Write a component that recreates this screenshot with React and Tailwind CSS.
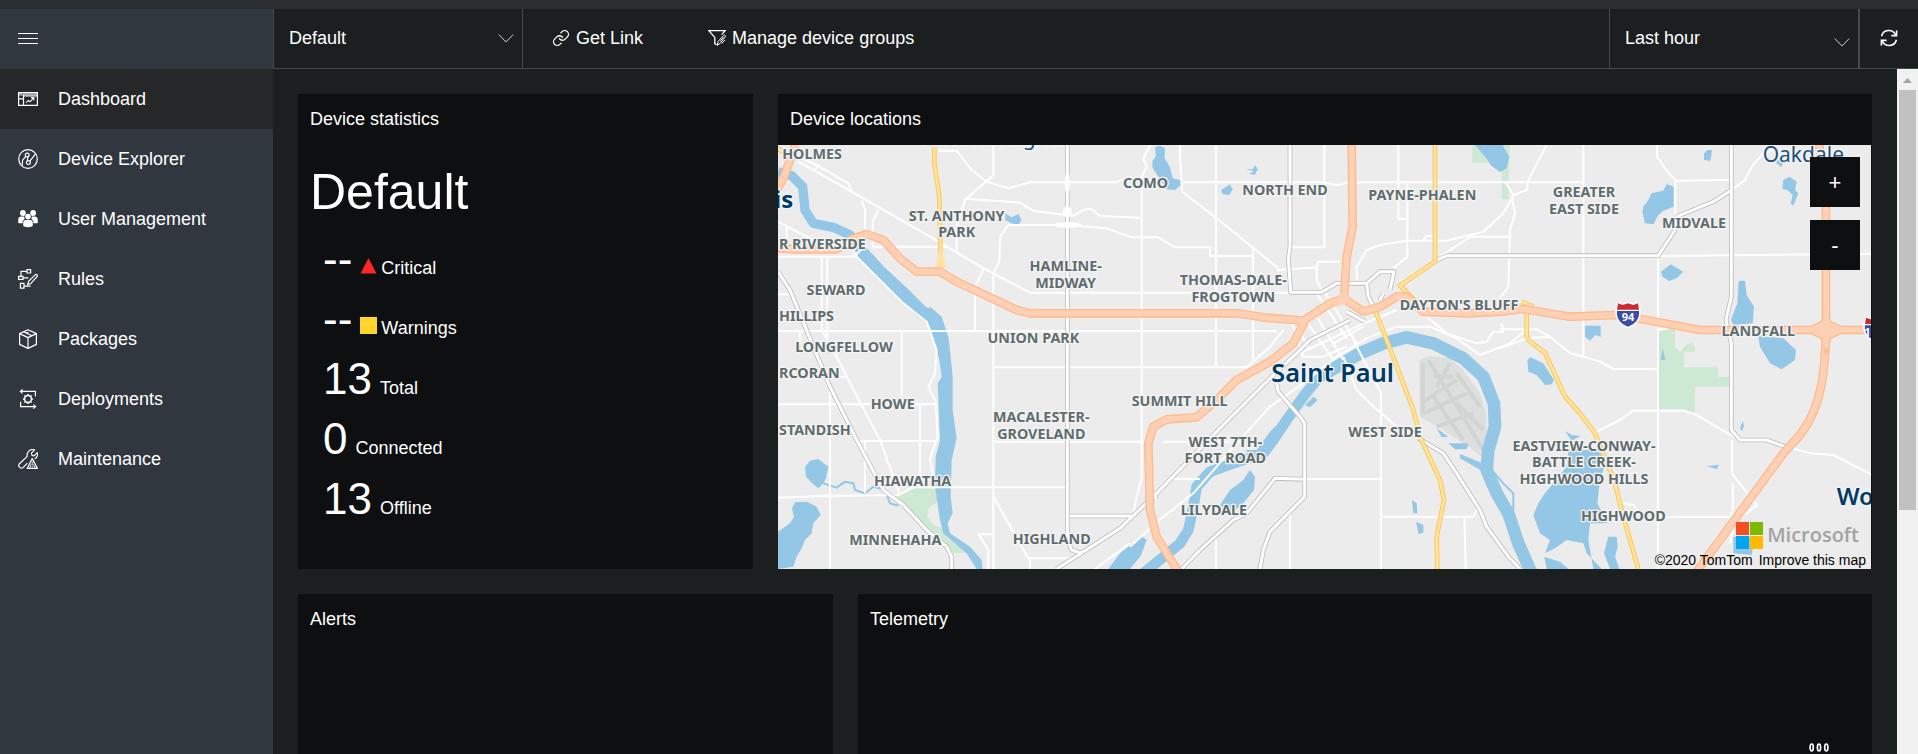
import React from 'react';
import { Link } from 'lucide-react';

/* ---------- icons ---------- */

const line = { fill: 'none', stroke: 'currentColor', strokeWidth: 1.2 };

function DashboardIcon() {
  return (
    <svg className="size-5 shrink-0" viewBox="0 0 20 20" {...line} aria-hidden="true">
      <path d="M0.6 3.6H19.4V16.4H0.6Z" />
      <path d="M0.6 5.4H19.4" strokeWidth="2.4" opacity="0.6" />
      <path d="M5.5 6V16.4M0.6 9.8H5.5M5.5 7H19.4" />
      <path d="M8 13.6L10.4 11.4L12 12.8L15.6 8.8M13 8.6H15.8V11.4" strokeWidth="1.1" />
    </svg>
  );
}

function ExplorerIcon() {
  return (
    <svg className="size-5 shrink-0" viewBox="0 0 20 20" {...line} aria-hidden="true">
      <circle cx="10" cy="10" r="9.3" />
      <circle cx="9.2" cy="6" r="1.9" />
      <circle cx="10.4" cy="13.6" r="1.9" />
      <path d="M7.8 7.4L4.6 11.2L4.2 16.4M9.8 8L9.4 11.8M11.8 12.2L17.4 5.2" />
    </svg>
  );
}

function UsersIcon() {
  return (
    <svg className="size-5 shrink-0" viewBox="0 0 20 20" fill="currentColor" aria-hidden="true">
      <circle cx="4.9" cy="4" r="2.9" />
      <circle cx="15.1" cy="4" r="2.9" />
      <path d="M0.2 14V10.5C0.2 8.6 1.6 7.4 3.4 7.4H6.2L6.6 10L4.6 12.2V14.3H1.2ZM19.8 14V10.5C19.8 8.6 18.4 7.4 16.6 7.4H13.8L13.4 10L15.4 12.2V14.3H18.8Z" />
      <circle cx="10" cy="7.6" r="2.8" />
      <path d="M5.2 17V13.8C5.2 12 6.4 10.9 8 10.9H12C13.6 10.9 14.8 12 14.8 13.8V17C12 18.6 8 18.6 5.2 17Z" />
    </svg>
  );
}

function RulesIcon() {
  return (
    <svg className="size-5 shrink-0" viewBox="0 0 20 20" {...line} aria-hidden="true">
      <path d="M9 0.6H12.6V4H9ZM0.6 7.4H5V10.4H0.6ZM2.4 14.4H6V19.2H2.4Z" />
      <path d="M9 2.4H3V7.4M5 8.8H10.4M6 17.2H12.6" />
      <path d="M9.6 15.8L10.6 12.2L17.4 5.6C18.2 4.8 20 6.2 19.2 7.4L12.8 14.6Z" />
    </svg>
  );
}

function PackageIcon() {
  return (
    <svg className="size-5 shrink-0" viewBox="0 0 20 20" {...line} strokeLinejoin="round" aria-hidden="true">
      <path d="M10 0.8L18.4 4.6V15.4L10 19.4L1.6 15.4V4.6Z" />
      <path d="M1.6 4.6L10 8.6L18.4 4.6M10 8.6V19.4M5.6 2.8L14 6.8M8 4.4L10.4 3.2" />
    </svg>
  );
}

function DeployIcon() {
  return (
    <svg className="size-5 shrink-0" viewBox="0 0 20 20" {...line} aria-hidden="true">
      <path d="M4.6 0.4L2.4 2.4L4.6 4.4M2.6 2.4H17.4V7.2M15.4 15.6L17.6 17.6L15.4 19.6M17.4 17.6H2.6V12.8" />
      <circle cx="10" cy="10" r="3.4" strokeWidth="1.5" />
      <path d="M10 4.9V6.4M10 13.6V15.1M4.9 10H6.4M13.6 10H15.1M6.4 6.4L7.5 7.5M12.5 12.5L13.6 13.6M6.4 13.6L7.5 12.5M12.5 7.5L13.6 6.4" strokeWidth="1.4" />
    </svg>
  );
}

function MaintenanceIcon() {
  return (
    <svg className="size-5 shrink-0" viewBox="0 0 20 20" {...line} strokeLinejoin="round" aria-hidden="true">
      <path d="M9.4 14.2L5 18.6C3 20.4 -0.4 17.4 1.2 15L9.2 7.4C8.4 3 12.4 -0.6 16.6 0.8L13.4 4.2L14 6.4L16 6.8L19.2 3.6C20.2 6.4 18.6 9.2 16.6 9.8" />
      <path d="M14.2 9.6L19.4 19.4H9.2Z" />
      <path d="M14.2 12.4V16.4M14.2 17.2V18.4M11.8 19L13 15.4M16.8 19L15.4 15.4" strokeWidth="0.9" />
    </svg>
  );
}

function FilterIcon() {
  return (
    <svg className="size-[18px] shrink-0" viewBox="0 0 18 18" {...line} aria-hidden="true">
      <path d="M8.6 15.8L6.8 14.6V8.4L0.8 1.6H17.2L13.6 5.6M0.8 1.6H17.2" strokeWidth="1.3" />
      <path d="M9.2 16.4L10.2 12.4L15.6 6.4C16.6 5.6 18 6.8 17.2 8L12 14.4ZM12.4 11.8L15.4 8.4M13.6 14.6L17 11" strokeWidth="1" />
    </svg>
  );
}

function RefreshIcon() {
  return (
    <svg className="size-[18px]" viewBox="0 0 18 18" {...line} strokeWidth="1.6" aria-hidden="true">
      <path d="M1.6 7.2C3.2 0.4 12.4 -0.6 15.8 5.8M16.4 10.8C14.8 17.6 5.6 18.6 2.2 12.2" />
      <path d="M16.6 1.4V6.6H11.4M1.4 16.6V11.4H6.6" />
    </svg>
  );
}

function Chevron() {
  return (
    <svg className="pointer-events-none absolute right-2 top-6 h-3 w-4 text-[#d0d0d0]" viewBox="0 0 16 12" fill="none" stroke="currentColor" aria-hidden="true">
      <path d="M0.8 1.5L8 9L15.2 1.5" />
    </svg>
  );
}

/* ---------- map ---------- */

const WATER = [
  'M480 530L450 560L480 590L508 690L515 740L503 760L507 860L510 930L497 980L495 1070L510 1170L520 1210L590 1270L620 1317H638L635 1290L600 1250L540 1210L533 1180L548 1150L542 1100L545 990L560 925L548 840V740L540 660L535 620L515 560Z',
  'M105 1010L120 992L145 987L175 1010L168 1045L160 1060L145 1075L125 1058L108 1040Z',
  'M75 1117L110 1115L140 1130L152 1155L130 1180L125 1210L105 1230L95 1255L80 1280L70 1310L24 1317V1205L60 1180L72 1160L66 1135Z',
  'M706 250L725 262L745 252L755 270L745 285L725 280L706 270Z',
  'M1155 52L1170 47L1185 55L1184 85L1200 112L1208 145L1230 150L1232 165L1215 180L1190 178L1165 140L1147 112L1148 92L1158 78Z',
  'M1353 180L1380 163L1388 178L1378 195L1358 192Z',
  'M1428 118H1448L1455 106L1463 118L1455 134L1438 132L1452 124Z',
  'M2115 45L2145 80L2165 108L2190 126L2210 115L2218 80L2200 50V45Z',
  'M2802 70L2812 60H2826L2822 92L2802 90Z',
  'M2620 230L2635 210L2645 190L2680 182L2690 162L2711 170V230L2680 242L2665 255L2650 283L2625 280L2617 245Z',
  'M2673 425L2702 403L2740 425L2720 445L2698 453L2677 440Z',
  'M3040 150L3058 140L3080 155L3075 180L3085 190L3070 227L3062 220L3068 195L3052 180L3037 178Z',
  'M3020 85L3040 95L3035 112L3018 98Z',
  'M2906 452H2925L2930 495L2952 530L2948 580L2890 585L2883 570L2902 520Z',
  'M2965 618L3040 625L3078 660L3075 690L3035 718L3000 700L2970 650Z',
  'M2445 587H2492V620L2475 615L2460 632L2445 620Z',
  'M2272 690L2282 682L2320 700L2352 750L2345 763L2325 765L2300 735L2275 725Z',
  'M2672 690L2678 655L2686 690Z',
  'M2910 895L2918 873L2922 888L2916 904Z',
  'M2812 1008L2847 1004L2840 1018Z',
  'M2350 1060L2390 1010L2395 960H2480L2510 990L2490 1050L2482 1120L2508 1170L2512 1180H2460L2455 1230L2470 1317H2495L2450 1270L2440 1240L2390 1230L2355 1255L2325 1270L2340 1230L2310 1210L2290 1155L2305 1120L2325 1090Z',
  'M2323 1280L2370 1295L2395 1317H2330Z',
  'M2515 1220H2540L2543 1250L2535 1280L2548 1317H2520L2502 1270Z',
  'M2890 1220H2955L2945 1275L2890 1270Z',
  'M2385 903L2405 915L2432 918L2405 932Z',
  'M1350 1125L1380 1080L1420 1050L1440 1020L1455 1040L1452 1080L1420 1120L1390 1145L1370 1155Z',
  'M1425 960L1460 960L1500 905L1520 885L1515 905L1480 950L1450 980Z',
  'M1605 825L1630 800L1643 810L1620 832Z',
  'M2000 895L2035 920L2015 922Z',
  'M2035 940H2095L2090 958H2055Z',
  'M2070 972L2150 1005L2140 1025L2070 985Z',
  'M1926 1110L1940 1120L1942 1150H1930Z',
  'M1938 1175L1960 1185V1208L1946 1212Z',
  'M1015 1317L1050 1270L1115 1218L1130 1230L1112 1278L1080 1317Z',
];

const PARKS = [
  'M2665 600L2715 597V650L2730 667L2748 645L2765 638L2775 650V665H2742V712H2844V740H2878V770H2775V848L2740 838H2665Z',
  'M2107 45V98H2170L2195 120V208H2216V110L2220 45Z',
  'M395 1085L440 1070L497 1078L502 1115L475 1135L472 1160L490 1185L520 1195L530 1220L592 1268H550L520 1230L470 1200L420 1140L380 1098Z',
];

const STREETS = [
  'M85 95L245 185L515 340L640 415L780 488H1560',
  'M75 75L140 105L235 160L245 185M135 120L142 105',
  'M505 62H560L605 120L650 155L715 175L780 157H1035L1085 140',
  'M670 45V135L585 210L560 290V360',
  'M590 207L700 214L750 218L790 243L910 257L945 238H965L990 258L1110 263',
  'M890 285H715L690 320L688 395L670 430V1317',
  'M890 285L1010 295L1085 322H1165L1215 352H1320V378H1450',
  'M1140 45L1120 85L1130 110L1115 140V1045L1100 1100L1090 1150',
  'M275 210L285 240V300M325 240L308 275V350H530',
  'M24 275L130 330M50 290V370M24 380H250L290 345',
  'M250 370L400 520L470 575L500 660L495 730L475 770L497 815L503 920L480 985L490 1040',
  'M24 603H1520M24 493H60M155 380V600L205 690M172 380V630',
  'M180 760V1317M395 605V800M24 823H500M450 825V1070M285 930V1090M270 933H503M90 605V640M170 740V765H185M200 740H230',
  'M24 1103L150 1098L385 1095L430 1072H890',
  'M190 660L230 740L330 930L390 1095',
  'M670 712H1430L1500 650L1540 600',
  'M670 935H1130M1180 935H1380',
  'M640 420L615 470V600',
  'M670 1100L775 1285H920M780 1285V1317M625 1213L655 1260V1317M625 1213H668',
  'M1338 45V710M1338 1220V1317M1449 355V700',
  'M1230 45V80L1237 185L1340 265L1525 415',
  'M1237 157H1660L1700 165L1740 157H2440',
  'M1520 420L1640 412L1645 395H1710M1640 412V450L1660 490M1663 45V352H1560',
  'M1885 45V267H1910M1912 157V380L1870 415',
  'M1760 410L1790 360L1830 345L1910 332H2030L2140 305L2200 250L2230 200',
  'M2000 385L2110 315M2100 320H2225M1960 330L1970 318H1990M1760 405V450',
  'M2330 45L2275 150L2270 180L2230 195L2205 155M2225 200L2235 250L2220 300L2215 470L2190 505',
  'M2440 45V680M2190 655L2270 625L2340 620L2400 670L2440 680L2490 695L2530 717H2660M2190 598H2300L2340 620',
  'M2661 45V80L2685 115L2716 150V290M2716 152L2880 150',
  'M2885 180L2925 150L2945 110L2980 70L3010 60',
  'M2664 385V1317M2664 378L3303 371M2664 600L2690 595',
  'M2480 905L2550 870L2590 842H2740L2780 855L2890 920',
  'M2690 1161H2890M2886 930V1030L2940 1100L2960 1125L2930 1150H2880M2888 1060V1200L2880 1240',
  'M3070 955L3120 970L3190 975L3303 1033',
  'M1210 1047H1290M1605 1047H1835M1833 790V1317M1720 680L1760 780L1800 820L1880 890M1750 630L1833 790',
  'M1838 1160H2110L2120 1140M2083 1160L2087 1317M1560 1150V1317',
  'M1080 1250L1180 1160L1270 1090L1340 1010L1400 940L1500 830L1600 760L1700 680L1790 625L1880 590L1980 590L2060 625L2130 675L2220 640L2270 600',
  'M1970 560L2030 610L2120 640L2150 635L2170 605H2200L2195 580',
  'M1640 490L1730 625M1660 480L1760 640M1610 575L1690 690M1640 560L1720 690M1580 590L1620 660M1590 670L1760 590L1880 540M1690 640L1780 590M1560 560L1600 680H1660L1730 650',
  'M975 1317L1080 1240M2560 1120L2590 1125L2610 1150',
];

const HIGHWAYS = [
  'M892 45V1230L905 1260L935 1270',
  'M24 425L60 480L130 650L180 770L260 930L340 1080L400 1125L470 1200L530 1250L545 1280V1317',
  'M860 1317L1050 1195L1165 1085L1340 905L1500 745L1580 670L1620 630L1740 570',
  'M1560 45V350L1555 385L1562 487H1655L1700 460H1790L1830 425H1872L1860 480',
  'M1790 460L1795 500L1815 540M1830 510L1840 490',
  'M1520 760L1525 785L1590 860L1604 880V1100L1500 1205L1480 1260L1470 1317',
  'M1604 1048L1515 1045L1430 1150L1390 1170L1290 1260L1235 1317',
  'M900 1158H1085',
  'M1945 925L2020 970L2060 1030L2130 1140L2150 1190L2215 1280L2250 1317',
  'M1990 395L2030 377H2665L2715 300L2720 260L2830 215L2885 180',
  'M2884 45V500L2868 570L2884 640V900L2910 930H2990L3060 955',
  'M1730 545L1785 575M1150 1090L1160 1110',
];

const ARTERIALS = [
  'M493 50V100L508 200L512 415',
  'M1995 45V395L1890 467L1975 550',
  'M1815 540L1850 630L1930 840L1950 920L2010 1050L2022 1110L2000 1220L2002 1317',
  'M2255 515L2290 530M2270 545V620L2280 635L2325 668L2385 800L2430 850L2475 910L2500 970L2535 1060L2560 1160L2605 1317',
];

const INTERSTATES = [
  'M24 355L80 358H200L250 325L290 312L340 330L390 385L440 425H510L560 455L740 540L780 550H1400L1480 562L1600 572L1680 520L1720 505L1780 545L1830 530L1880 500L1910 500L1960 545L2090 550L2190 545L2260 537L2400 560L2540 555L2630 570L2790 600H3303',
  'M24 175L42 140L76 45',
  'M1745 45L1748 290L1730 380L1722 505',
  'M1605 572L1570 640L1500 695L1400 750L1340 810L1280 862L1190 868L1150 890L1135 940L1140 1140L1160 1220L1225 1325',
  'M3148 45L3168 240V600Q3166 700 3155 760Q3140 850 3090 915L3040 970L2780 1325',
];

const RUNWAYS = [
  'M1958 700V850M1975 690L2140 960M1990 740H2050M2040 700L2000 770M1960 815L2060 750M1960 850L2090 790M2060 730L2130 830M2000 890L2110 850M1990 800L2080 930M2060 820L2140 900',
];

const LABELS = [
  ['HOLMES', 126, 87], ['ST. ANTHONY', 560, 273], ['PARK', 560, 322], ['SEWARD', 198, 496],
  ['LONGFELLOW', 222, 667], ['HOWE', 368, 838], ['HIAWATHA', 428, 1067], ['MINNEHAHA', 376, 1246],
  ['HIGHLAND', 845, 1241], ['MACALESTER-', 814, 877], ['GROVELAND', 814, 926], ['UNION PARK', 790, 638],
  ['HAMLINE-', 887, 424], ['MIDWAY', 887, 473], ['COMO', 1127, 174], ['NORTH END', 1545, 195],
  ['PAYNE-PHALEN', 1957, 209], ['THOMAS-DALE-', 1390, 466], ['FROGTOWN', 1390, 515],
  ["DAYTON'S BLUFF", 2067, 539], ['GREATER', 2442, 202], ['EAST SIDE', 2442, 252], ['MIDVALE', 2772, 293],
  ['LANDFALL', 2965, 618], ['SUMMIT HILL', 1229, 828], ['WEST 7TH-', 1366, 951], ['FORT ROAD', 1366, 1000],
  ['WEST SIDE', 1845, 920], ['LILYDALE', 1332, 1155], ['EASTVIEW-CONWAY-', 2442, 963],
  ['BATTLE CREEK-', 2442, 1012], ['HIGHWOOD HILLS', 2442, 1061], ['HIGHWOOD', 2560, 1173],
];

const EDGE_LABELS = [['R RIVERSIDE', 357], ['HILLIPS', 574], ['RCORAN', 743], ['STANDISH', 915]];

function Roads({ paths, casing, fill, outer, inner }) {
  const d = paths.join('');
  return (
    <g fill="none" strokeLinejoin="round">
      {casing && <path d={d} stroke={casing} strokeWidth={outer} />}
      <path d={d} stroke={fill} strokeWidth={inner} />
    </g>
  );
}

function Shield({ x, y, label, labelX = 0 }) {
  return (
    <g transform={`translate(${x} ${y})`}>
      <path d="M-30 -40L-16 -35L0 -40L16 -35L30 -40L38 -18C42 10 26 32 0 40C-26 32 -42 10 -38 -18Z" fill="#fff" />
      <path d="M-33 -12H33C36 10 22 28 0 35C-22 28 -36 10 -33 -12Z" fill="#3c4ba6" />
      <path d="M-33 -16L-30 -35L-16 -30L0 -35L16 -30L30 -35L33 -16Z" fill="#cc2a2e" />
      <text x={labelX} y="19" textAnchor="middle" fontSize="33" fontWeight="700" fill="#fff">{label}</text>
    </g>
  );
}

function MapDrawing() {
  return (
    <svg
      className="absolute inset-0 size-full font-['Noto_Sans',sans-serif]"
      viewBox="24 45 3279 1272"
      preserveAspectRatio="xMidYMid slice"
      role="img"
      aria-label="Map of Saint Paul"
    >
      <rect x="-500" y="-500" width="4400" height="2400" fill="#ececec" />
      <path d={PARKS.join('')} fill="#cde8d3" />
      <path d="M1948 690L1980 678L2040 685L2080 720L2130 790L2148 850L2150 920L2135 980L2080 940L2010 895L1950 860Z" fill="#dcdfde" />
      <path d={RUNWAYS.join('')} stroke="#d0d4d3" strokeWidth="12" fill="none" />
      <g fill="none" stroke="#94c7e6" strokeLinejoin="round">
        <path d="M24 125L65 137L98 170L105 240L130 280L190 292L240 315L275 365L330 425" strokeWidth="28" />
        <path d="M275 365L330 425L400 490L450 540L490 570" strokeWidth="38" />
        <path d="M1120 1330L1230 1240L1255 1200L1270 1130L1280 1070L1320 1025L1390 1000L1480 970L1510 930L1550 870L1600 800L1640 750L1680 720" strokeWidth="32" />
        <path d="M1670 728L1770 670L1840 640L1910 622L1990 640L2080 685L2140 740L2172 820L2175 890L2155 960L2150 1020L2180 1090L2215 1150L2245 1240L2285 1330" strokeWidth="38" />
        <path d="M160 1060L200 1073L225 1055L250 1060L255 1080L285 1090L310 1070L345 1080L360 1120L385 1127M2165 1020L2200 1060L2230 1090V1140" strokeWidth="6" />
      </g>
      <path d={WATER.join('')} fill="#94c7e6" />
      <Roads paths={STREETS} fill="#fff" inner={6} />
      <Roads paths={HIGHWAYS} casing="#bdbdbd" fill="#fff" outer={14} inner={9} />
      <ellipse cx="892" cy="160" rx="8" ry="34" fill="#fff" />
      <ellipse cx="892" cy="245" rx="13" ry="17" fill="#fff" />
      <ellipse cx="892" cy="285" rx="42" ry="8" fill="#fff" />
      <Roads paths={ARTERIALS} casing="#fbc94b" fill="#ffe2a4" outer={14} inner={8} />
      <path d="M495 412L512 345L528 412Z" fill="#ffe2a4" />
      <path d="M24 50L60 72M24 62L50 78" stroke="#fbc94b" strokeWidth="4" />
      <Roads paths={INTERSTATES} casing="#ffb98c" fill="#ffd0b4" outer={26} inner={18} />
      <path d="M3168 540L3182 575L3235 600L3182 625L3168 675L3154 625L3100 600L3154 575Z" fill="#ffd0b4" stroke="#ffb98c" strokeWidth="4" />
      <path d="M3168 520V650M3080 600H3250" stroke="#ffd0b4" strokeWidth="18" />
      <path d="M1722 480L1745 515L1700 530L1685 520Z" fill="#ffd0b4" />
      <Shield x={2574} y={555} label="94" />
      <Shield x={3318} y={598} label="1" labelX={-26} />
      <g fill="#5f6d6f" stroke="#f4f4f4" strokeWidth="8" strokeLinejoin="round" paintOrder="stroke" fontSize="43" fontWeight="700">
        {LABELS.map(([t, x, y]) => (
          <text key={t} x={x} y={y} textAnchor="middle">{t}</text>
        ))}
        {EDGE_LABELS.map(([t, y]) => (
          <text key={t} x="27" y={y}>{t}</text>
        ))}
      </g>
      <g fill="#003a66" stroke="#f4f4f4" strokeWidth="8" strokeLinejoin="round" paintOrder="stroke" fontSize="76">
        <text x="1688" y="757" textAnchor="middle" fontWeight="600">Saint Paul</text>
        <text x="70" y="235" textAnchor="end" fontSize="72" fontWeight="700">is</text>
        <text x="3200" y="1125" fontSize="72" fontWeight="600">Wo</text>
        <g fill="#1f5078" fontSize="63">
          <text x="2978" y="96">Oakdale</text>
          <text x="670" y="46" textAnchor="middle">Falcon Heights</text>
        </g>
      </g>
    </svg>
  );
}

/* ---------- page ---------- */

const NAV = [
  ['Dashboard', DashboardIcon],
  ['Device Explorer', ExplorerIcon],
  ['User Management', UsersIcon],
  ['Rules', RulesIcon],
  ['Packages', PackageIcon],
  ['Deployments', DeployIcon],
  ['Maintenance', MaintenanceIcon],
];

function Sidebar() {
  return (
    <nav className="flex w-[273px] shrink-0 flex-col bg-[#30373f]" aria-label="Main">
      <button type="button" aria-label="Toggle navigation" className="flex h-[60px] items-center px-[18px]">
        <svg className="h-3 w-5" viewBox="0 0 20 12" stroke="currentColor" aria-hidden="true">
          <path d="M0 0.5H20M0 5.5H20M0 10.5H20" />
        </svg>
      </button>
      {NAV.map(([label, Icon], i) => (
        <a
          key={label}
          href="#"
          aria-current={i === 0 ? 'page' : undefined}
          className={`flex h-[60px] items-center gap-5 px-[18px] ${i === 0 ? 'bg-[#262728]' : ''}`}
        >
          <Icon />
          {label}
        </a>
      ))}
    </nav>
  );
}

function Header() {
  return (
    <header className="flex h-[60px] shrink-0 border-b border-[#474a4a]">
      <div className="relative w-[250px] border-x border-[#474a4a]">
        <select aria-label="Device group" className="size-full appearance-none bg-transparent pb-px pl-[15px] pr-8 outline-none">
          <option>Default</option>
        </select>
        <Chevron />
      </div>
      <button type="button" className="ml-[29px] flex items-center gap-1.5 pb-px">
        <Link className="size-[18px] shrink-0" strokeWidth={1.7} aria-hidden="true" />
        Get Link
      </button>
      <button type="button" className="ml-[65px] flex items-center gap-1.5 pb-px">
        <FilterIcon />
        Manage device groups
      </button>
      <div className="relative ml-auto w-[251px] border-l border-r-2 border-[#474a4a]">
        <select aria-label="Time interval" className="size-full appearance-none bg-transparent pb-px pl-[15px] pr-8 outline-none">
          <option>Last hour</option>
        </select>
        <div className="pointer-events-none absolute right-0 top-1">
          <Chevron />
        </div>
      </div>
      <button type="button" aria-label="Refresh" className="flex w-[58px] items-center justify-center pb-px">
        <RefreshIcon />
      </button>
    </header>
  );
}

function Panel({ title, className = '', children }) {
  return (
    <section className={`flex flex-col bg-[#0d0f10] ${className}`}>
      <h2 className="h-[51px] shrink-0 px-3 pt-[13px] leading-6">{title}</h2>
      {children}
    </section>
  );
}

function Stat({ value, label, children }) {
  return (
    <div className="flex h-[60px] items-baseline">
      <dd className="order-1 mr-2 text-[44px] leading-[60px]">{value}</dd>
      <dt className="order-2 flex items-baseline gap-1">
        {children}
        {label}
      </dt>
    </div>
  );
}

function Statistics() {
  return (
    <Panel title="Device statistics" className="h-[475px]">
      <p className="px-3 pt-[17px] text-[50px] leading-[60px]">Default</p>
      <dl className="pl-[25px] pt-[7px]">
        <Stat value="--" label="Critical">
          <svg className="h-4 w-[17px]" viewBox="0 0 17 16" aria-hidden="true">
            <path d="M8.5 0L16.5 15.5H0.5Z" fill="#fc2727" />
          </svg>
        </Stat>
        <Stat value="--" label="Warnings">
          <span className="size-[17px] bg-[#ffd52b]" />
        </Stat>
        <Stat value="13" label="Total" />
        <Stat value="0" label="Connected" />
        <Stat value="13" label="Offline" />
      </dl>
    </Panel>
  );
}

function Locations() {
  return (
    <Panel title="Device locations" className="h-[475px]">
      <div className="relative mr-px flex-1 overflow-hidden">
        <MapDrawing />
        <div className="absolute right-[11px] top-3 flex flex-col gap-[13px]">
          <button type="button" aria-label="Zoom in" className="size-[50px] bg-[#0d0f10] text-[22px]">+</button>
          <button type="button" aria-label="Zoom out" className="size-[50px] bg-[#0d0f10] text-[22px]">-</button>
        </div>
        <div className="absolute bottom-5 right-3 flex items-center gap-1">
          <svg className="size-[27px]" viewBox="0 0 27 27" aria-hidden="true">
            <path d="M0 0H13V13H0Z" fill="#f25022" />
            <path d="M14 0H27V13H14Z" fill="#7fba00" />
            <path d="M0 14H13V27H0Z" fill="#00a4ef" />
            <path d="M14 14H27V27H14Z" fill="#ffb900" />
          </svg>
          <span className="font-['Open_Sans',sans-serif] text-[20px] font-semibold leading-7 text-[#a3a3a3]">Microsoft</span>
        </div>
        <div className="absolute bottom-0 right-[5px] flex gap-1.5 text-[14px] leading-[18px] text-black">
          <span>©2020 TomTom</span>
          <a href="#">Improve this map</a>
        </div>
      </div>
    </Panel>
  );
}

function Scrollbar() {
  return (
    <div className="flex w-[21px] shrink-0 flex-col items-center bg-[#f1f1f1]" aria-hidden="true">
      <svg className="h-[21px] w-[9px] shrink-0" viewBox="0 0 9 21">
        <path d="M4.5 9L9 14H0Z" fill="#a3a3a3" />
      </svg>
      <div className="h-[61.3%] w-[17px] bg-[#c1c1c1]" />
    </div>
  );
}

export default function App() {
  return (
    <div className="flex h-screen flex-col overflow-hidden bg-[#1b1f1f] font-['Liberation_Sans',Arial,sans-serif] text-[18px] text-white">
      <div className="h-[9px] shrink-0 bg-[#2a2e31]" />
      <div className="flex min-h-0 flex-1">
        <Sidebar />
        <div className="flex min-w-0 flex-1 flex-col">
          <Header />
          <div className="flex min-h-0 flex-1">
            <main className="flex min-w-0 flex-1 flex-col gap-[25px] overflow-hidden p-[25px]">
              <div className="grid shrink-0 grid-cols-[455fr_1094fr] gap-[25px]">
                <Statistics />
                <Locations />
              </div>
              <div className="grid shrink-0 grid-cols-[535fr_1014fr] gap-[25px]">
                <Panel title="Alerts" className="h-[475px]" />
                <Panel title="Telemetry" className="h-[475px]">
                  <button type="button" aria-label="More" className="mr-[43px] mt-[98px] self-end">
                    <svg className="h-[9px] w-5" viewBox="0 0 20 9" fill="none" stroke="currentColor" strokeWidth="1.7" aria-hidden="true">
                      <ellipse cx="2.7" cy="4.5" rx="1.6" ry="3.5" />
                      <ellipse cx="10" cy="4.5" rx="1.6" ry="3.5" />
                      <ellipse cx="17.3" cy="4.5" rx="1.6" ry="3.5" />
                    </svg>
                  </button>
                </Panel>
              </div>
            </main>
            <Scrollbar />
          </div>
        </div>
      </div>
    </div>
  );
}
